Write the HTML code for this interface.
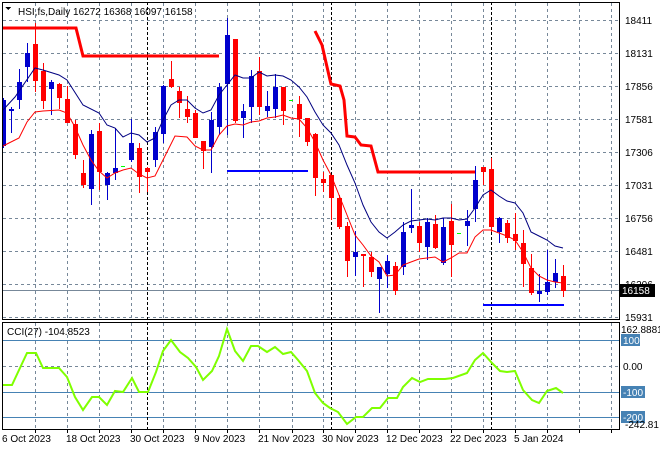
<!DOCTYPE html>
<html><head><meta charset="utf-8"><style>
html,body{margin:0;padding:0;background:#fff;width:660px;height:450px;overflow:hidden}
svg{display:block}
text{font-family:"Liberation Sans","DejaVu Sans",sans-serif;font-size:10px;fill:#000}
</style></head><body>
<svg id="s" width="660" height="450" xmlns="http://www.w3.org/2000/svg" shape-rendering="crispEdges">
<rect width="660" height="450" fill="#fff"/>
<g id="grid" stroke="#778899" stroke-dasharray="3,3" stroke-width="1"></g>
<g stroke="#4682b4" stroke-width="1">
<line x1="3" y1="340.5" x2="619" y2="340.5"/>
<line x1="3" y1="392.5" x2="619" y2="392.5"/>
<line x1="3" y1="417.5" x2="619" y2="417.5"/>
</g>
<line x1="3" y1="290.5" x2="619" y2="290.5" stroke="#778899"/>
<g stroke="#000" stroke-dasharray="3,2">
<line x1="147.5" y1="2" x2="147.5" y2="429"/>
<line x1="331.5" y1="2" x2="331.5" y2="429"/>
<line x1="491.5" y1="2" x2="491.5" y2="429"/>
</g>
<g id="c"></g>
<g fill="none" shape-rendering="auto">
<polyline id="navy" stroke="#000080" stroke-width="1"/>
<polyline id="rma" stroke="#ff0000" stroke-width="1"/>
<polyline stroke="#ff0000" stroke-width="3" points="3,28 76,28 83,56 219,56"/>
<polyline stroke="#ff0000" stroke-width="3" points="315,31 322,45 330,80 331,84 340,86 344,100 347,136 355,137 361,145 371,146 378,172 475,172"/>
<polyline id="cci" stroke="#7fff00" stroke-width="2"/>
</g>
<line x1="227" y1="171" x2="308" y2="171" stroke="#0000ff" stroke-width="2"/>
<line x1="483" y1="305" x2="564" y2="305" stroke="#0000ff" stroke-width="2"/>
<line x1="121" y1="166.5" x2="125" y2="166.5" stroke="#00ff00"/>
<line x1="289" y1="100.5" x2="293" y2="100.5" stroke="#00ff00"/>
<line x1="457" y1="233.5" x2="461" y2="233.5" stroke="#00ff00"/>
<g fill="none" stroke="#000" stroke-width="1">
<rect x="2.5" y="2.5" width="617" height="317"/>
<rect x="2.5" y="322.5" width="617" height="107"/>
</g>
<g id="ticks" stroke="#000"></g>
<path d="M5,7 L11,7 L8,10 Z" fill="#000"/>
<text x="18" y="15">HSI,fs,Daily  16272 16368 16097 16158</text>
<text x="7" y="335">CCI(27) -104.8523</text>
<g>
<text x="625" y="24">18411</text>
<text x="625" y="57">18131</text>
<text x="625" y="90">17856</text>
<text x="625" y="123">17581</text>
<text x="625" y="156">17306</text>
<text x="625" y="189">17031</text>
<text x="625" y="222">16756</text>
<text x="625" y="255">16481</text>
<text x="625" y="288">16206</text>
<text x="625" y="321">15931</text>
<rect x="620" y="284" width="35" height="13" fill="#000"/>
<text x="622" y="294" style="fill:#fff">16158</text>
<text x="621" y="333">162.8881</text>
<rect x="621" y="334" width="19" height="12" fill="#4682b4"/>
<text x="623" y="344" style="fill:#fff">100</text>
<text x="623" y="370">0.00</text>
<rect x="621" y="386" width="24" height="12" fill="#4682b4"/>
<text x="623" y="396" style="fill:#fff">-100</text>
<rect x="621" y="411" width="24" height="12" fill="#4682b4"/>
<text x="623" y="421" style="fill:#fff">-200</text>
<text x="625" y="428">-242.81</text>
</g>
<g>
<text x="2" y="442">6 Oct 2023</text>
<text x="66" y="442">18 Oct 2023</text>
<text x="130" y="442">30 Oct 2023</text>
<text x="194" y="442">9 Nov 2023</text>
<text x="258" y="442">21 Nov 2023</text>
<text x="322" y="442">30 Nov 2023</text>
<text x="386" y="442">12 Dec 2023</text>
<text x="450" y="442">22 Dec 2023</text>
<text x="514" y="442">5 Jan 2024</text>
</g>
</svg>
<script>
var NS="http://www.w3.org/2000/svg";
function el(p,t,a){var e=document.createElementNS(NS,t);for(var k in a)e.setAttribute(k,a[k]);p.appendChild(e);return e;}
var g=document.getElementById('grid');
var vx=[35,67,99,131,163,195,227,259,292,323,355,387,419,451,483,515,547,579,611];
vx.forEach(function(x){el(g,'line',{x1:x+.5,y1:3,x2:x+.5,y2:319});el(g,'line',{x1:x+.5,y1:323,x2:x+.5,y2:429});});
[20,53,86,119,152,185,218,251,284,317].forEach(function(y){el(g,'line',{x1:3,y1:y+.5,x2:619,y2:y+.5});});
el(g,'line',{x1:3,y1:366.5,x2:619,y2:366.5});
var tk=document.getElementById('ticks');
vx.forEach(function(x){el(tk,'line',{x1:x+.5,y1:429,x2:x+.5,y2:433});});
var C=[[1,98,148,100,146],[1,107,133,109,111],[1,69,109,82,100],[1,43,82,53,67],[0,23,92,44,81],[0,63,109,71,101],[1,80,115,82,89],[0,83,109,84,98],[0,86,123,99,123],[0,120,159,124,155],[0,160,188,173,185],[1,130,205,134,189],[0,123,190,131,172],[1,172,200,173,185],[1,128,180,168,173],null,[1,119,162,143,160],[0,143,193,148,177],[0,167,192,168,172],[1,127,167,132,160],
[1,85,143,86,134],[0,61,88,79,87],[0,87,118,91,103],[0,96,123,109,117],[0,110,138,113,138],[0,141,169,141,151],[1,112,173,120,147],[1,83,135,87,127],[1,18,135,35,84],[0,39,123,39,121],[1,104,138,111,118],[1,70,123,76,107],[0,57,115,71,107],[1,91,117,106,111],[1,74,118,87,109],[0,87,125,87,111],null,[0,96,137,104,119],[0,118,146,118,142],[0,133,196,134,178],
[0,172,192,179,183],[0,177,220,175,198],[0,195,229,198,227],[0,222,277,226,261],[1,231,276,252,257],[0,254,287,254,256],[0,252,277,257,272],[1,267,313,267,279],[1,255,288,261,274],[0,262,295,266,291],[1,222,275,232,267],[1,189,233,225,228],[0,222,252,226,243],[1,218,260,222,247],[0,215,249,224,248],[1,218,265,227,263],[0,204,277,221,245],null,[1,210,246,221,226],[1,166,222,180,209],
[0,167,185,167,172],[0,158,232,169,227],[1,217,243,218,232],[0,220,243,223,238],[0,213,250,234,241],[0,230,287,243,264],[0,254,295,268,293],[1,274,302,291,294],[1,250,295,282,292],[1,259,288,273,282],[0,265,297,276,291]];
var cg=document.getElementById('c');
C.forEach(function(d,i){if(!d)return;var x=3+8*i;var col=d[0]?'#0000cd':'#ff0000';
el(cg,'rect',{x:x,y:d[1],width:1,height:d[2]-d[1],fill:col});
var bx=Math.max(3,x-2);el(cg,'rect',{x:bx,y:d[3],width:x+3-bx,height:Math.max(2,d[4]-d[3]),fill:col});});
var navy=[3,110,15,97,35,68,43,70,59,75,67,80,83,105,99,113,107,125,115,128,123,137,131,133,139,135,147,142,155,138,163,120,171,105,179,100,187,100,195,108,203,113,211,110,219,95,227,85,235,75,243,78,251,78,259,72,267,76,275,75,283,76,291,80,299,87,307,97,315,112,323,125,331,133,339,145,347,165,355,183,363,205,371,222,379,232,387,238,395,232,403,225,411,221,419,220,427,219,435,220,443,218,451,218,459,220,467,219,475,208,483,195,491,190,499,196,507,201,515,203,523,213,531,232,539,236,547,240,555,246,563,248];
var rma=[3,146,19,138,27,122,35,112,43,111,59,110,67,113,75,127,83,145,91,160,99,171,107,178,115,173,123,170,131,168,139,174,147,178,155,176,163,160,175,136,187,137,195,146,203,150,211,150,219,135,227,126,235,124,243,125,251,122,259,121,267,118,275,117,283,115,291,118,299,119,307,128,315,142,323,160,331,175,339,195,347,215,355,235,363,245,371,256,379,262,387,276,395,275,403,265,411,262,419,259,427,258,435,257,443,262,451,258,459,253,467,253,475,237,483,230,491,230,499,233,507,236,515,240,523,252,531,268,539,276,547,280,555,282,563,283];
var cci=[3,385,12,385,27,353,36,353,43,368,59,368,67,377,75,397,83,410,92,397,99,397,107,405,115,391,123,392,132,378,139,392,148,392,156,372,163,351,171,340,180,352,188,358,196,367,203,380,212,371,219,356,227,329,235,351,243,361,251,346,258,346,267,352,275,347,283,354,291,352,298,360,307,371,315,393,323,403,330,408,338,412,347,424,356,417,363,417,372,408,380,408,388,398,397,398,403,387,412,378,420,382,428,379,445,379,453,378,467,373,475,360,483,353,492,363,500,371,507,372,515,371,523,390,532,400,539,403,547,391,556,388,563,393];
function pts(a){var s=[];for(var i=0;i<a.length;i+=2)s.push(a[i]+','+a[i+1]);return s.join(' ');}
document.getElementById('navy').setAttribute('points',pts(navy));
document.getElementById('rma').setAttribute('points',pts(rma));
document.getElementById('cci').setAttribute('points',pts(cci));
</script>
</body></html>
